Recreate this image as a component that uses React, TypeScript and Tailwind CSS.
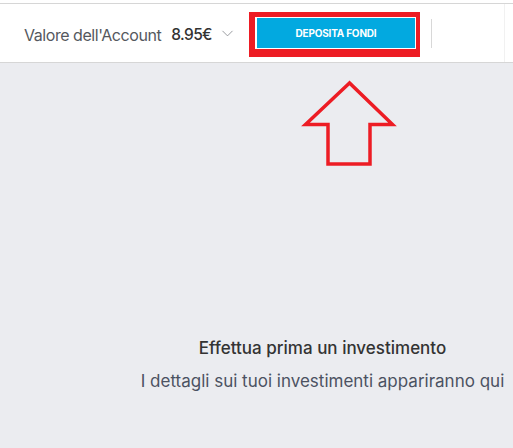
import { ChevronDown } from "lucide-react";

export default function App() {
  return (
    <main className="relative w-[513px] h-[448px] overflow-hidden bg-[#ebecf0] font-['Inter',sans-serif]">
      <div className="bg-white pt-[3px]">
        <header className="h-[60px] flex items-center border-y border-[#d6d6d6] pl-6">
          <p className="mt-[3px] text-[16px] text-[#55585e] tracking-[-0.45px]">Valore dell'Account</p>
          <p className="mt-[3px] ml-[10px] text-[15.5px] font-medium text-[#333333] tracking-[-0.6px]">8.95€</p>
          <ChevronDown className="ml-[6px] mt-[1px] text-[#8a8d93]" size={19} strokeWidth={1.1} />
          <div className="ml-auto mt-[3px] flex items-start w-[171px] h-[45px] border-[#ed1c24] border-l-[6px] border-t-[5px] border-r-[4px] border-b-[8px] pl-[2px] pt-[1px]">
            <button className="w-[158px] h-[30px] bg-[#02a9e0] text-white text-[10px] font-bold tracking-[-0.2px]">
              DEPOSITA FONDI
            </button>
          </div>
          <div className="ml-[11px] w-px h-[29px] bg-[#d8d8d8]" />
          <div className="ml-[72px] self-stretch w-[9px] border-l border-[#f1f1f1]" />
        </header>
      </div>

      <svg
        className="absolute left-[300px] top-[78px]"
        width="98"
        height="92"
        viewBox="300 78 98 92"
        fill="none"
      >
        <path
          d="M349.5 83 L305.5 124.5 L328 124.5 L328 164 L370 164 L370 124.5 L392.5 124.5 Z"
          stroke="#ed1c24"
          strokeWidth="3.5"
          strokeLinejoin="miter"
        />
      </svg>

      <section className="flex flex-col items-center pl-[132px] pt-[273px]">
        <p className="text-[17px] font-medium text-[#333333]">Effettua prima un investimento</p>
        <p className="mt-[7px] text-[17px] text-[#4b5262]">I dettagli sui tuoi investimenti appariranno qui</p>
      </section>
    </main>
  );
}
